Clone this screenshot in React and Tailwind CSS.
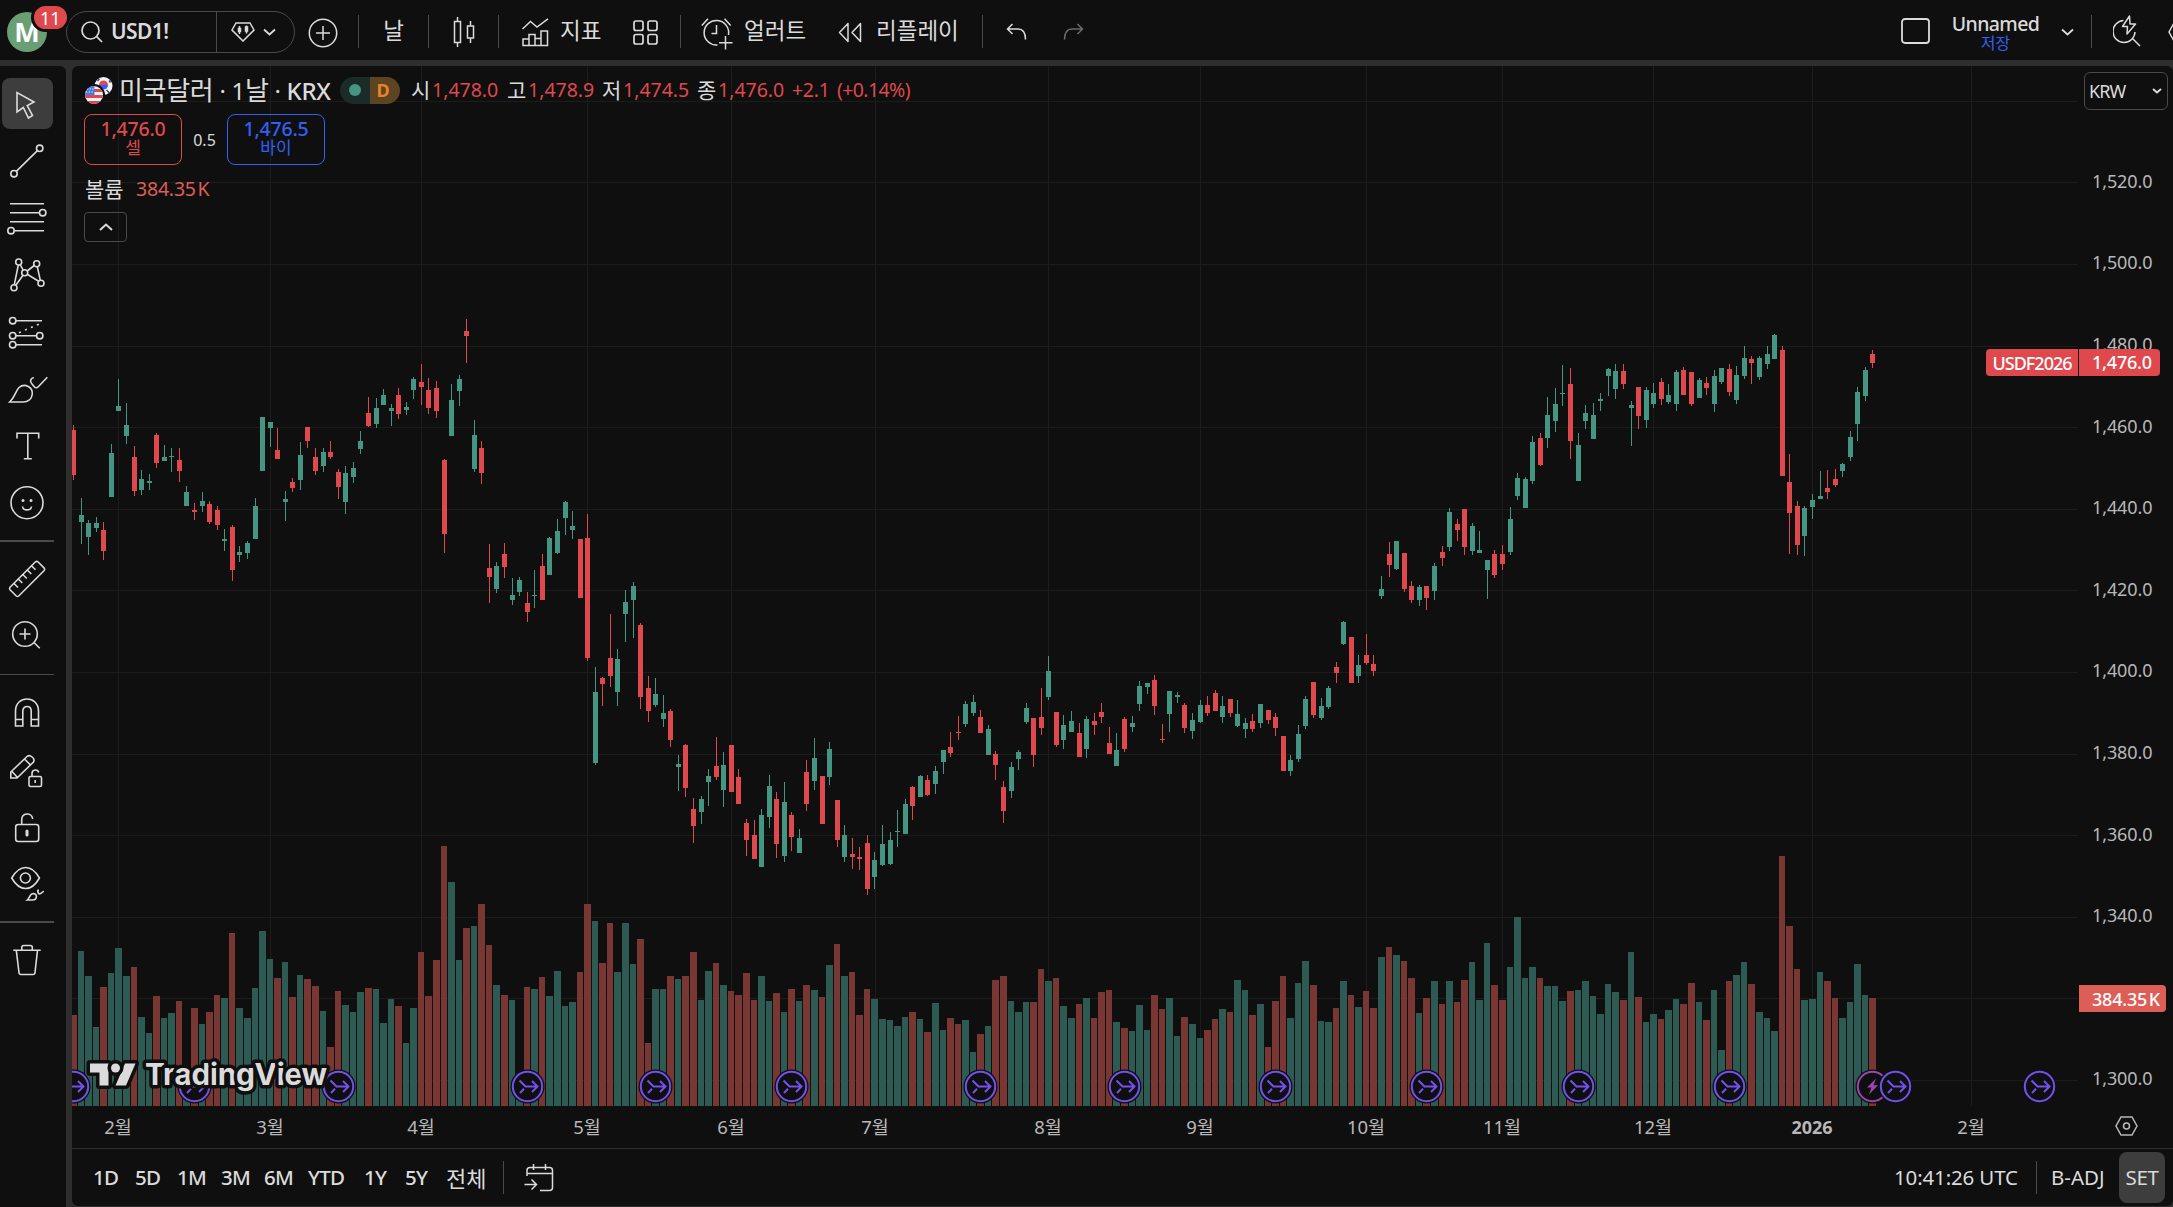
import React from "react";

// one row per session: direction, high, body top, body bottom, low, volume top
const SESSIONS = `
R 425 430 475 480 1015|G 498 515 522 544 951|G 520 523 537 555 976|G 517 523 528 532 1027|R 522 530 551 560 987|G 444 453 497 497 973
G 379 406 411 411 948|G 403 425 436 444 976|R 446 457 491 496 967|G 470 479 490 495 1017|G 474 481 483 490 1033|R 433 435 463 468 996
G 445 457 461 461 1018|G 448 456 457 472 1013|R 448 460 471 482 1001|G 486 492 506 506 1078|R 503 510 512 520 1008|G 492 501 506 512 1024
R 501 504 522 524 1012|R 506 510 525 530 995|G 529 539 541 551 998|R 525 527 570 581 933|G 546 552 555 562 1008|G 541 543 553 559 1018
G 498 506 539 539 988|G 417 417 471 471 931|G 422 422 428 447 959|R 428 450 459 459 978|G 491 499 502 521 962|R 478 482 488 492 997
G 442 455 480 490 975|R 427 427 441 448 979|R 448 457 471 475 986|G 448 452 466 472 1011|R 441 452 457 459 1047|R 469 472 487 499 991
G 466 473 502 514 1005|G 462 468 477 483 1012|G 431 441 449 454 992|R 397 413 426 427 988|G 398 408 424 428 989|G 389 395 405 405 1023
G 404 408 411 426 999|R 388 395 414 419 1006|G 402 407 410 415 1043|G 377 379 390 399 1008|R 364 382 387 405 952|R 378 390 408 414 996
R 381 388 411 418 960|R 459 460 534 553 846|G 384 400 436 436 882|G 375 379 391 406 960|R 319 331 336 363 928|G 420 435 469 472 926
R 441 448 473 484 904|R 544 568 577 603 945|G 562 566 589 593 985|R 543 554 567 578 995|G 578 595 600 605 1000|G 577 580 592 596 1073
R 592 603 612 622 987|G 570 595 596 608 989|R 554 566 600 600 977|G 537 538 575 575 996|G 519 531 553 554 971|G 501 502 518 535 1006
G 511 526 530 539 1002|R 539 539 598 598 972|R 514 538 658 661 904|G 667 692 763 765 921|R 677 678 684 706 963|R 614 658 676 687 923
G 649 659 692 706 972|G 590 602 614 642 923|G 582 586 600 638 964|R 623 625 697 709 939|R 676 688 711 722 1043|G 678 694 705 707 989
G 695 713 719 727 989|R 709 711 740 747 976|G 755 764 767 791 979|R 744 745 788 797 976|R 798 809 826 843 952|G 796 799 812 824 1000
G 769 776 782 806 971|R 737 766 777 780 963|G 752 765 790 807 985|R 745 745 792 792 991|R 769 777 804 804 995|R 819 823 840 856 973
R 820 835 859 859 1000|G 809 815 867 867 976|G 775 786 817 828 1001|R 792 799 844 858 993|G 782 802 856 862 1012|R 812 815 837 851 989
G 829 838 853 853 1001|R 760 772 804 811 985|G 738 758 781 790 990|R 776 776 824 824 997|G 742 749 777 785 965|R 800 800 840 847 944
G 825 835 857 862 976|R 838 854 857 869 972|R 847 857 859 870 1015|R 835 843 889 895 989|G 852 860 877 889 999|G 825 844 865 866 1019
G 832 840 864 865 1020|G 810 831 832 847 1026|G 799 804 834 834 1017|R 786 787 806 820 1012|G 775 776 797 797 1019|R 775 780 795 796 1032
G 766 771 784 794 1003|G 750 750 762 774 1030|R 732 747 753 757 1018|R 716 732 733 740 1024|G 701 704 724 727 1020|G 695 702 713 716 1052
R 710 717 733 733 1034|G 725 729 755 755 1026|R 751 754 765 780 980|R 781 787 811 823 976|G 762 767 791 798 1001|G 750 752 759 770 1012
G 703 708 722 724 1002|R 718 718 755 767 1002|R 688 717 728 735 969|G 656 671 697 700 981|R 712 712 745 747 978|G 715 725 740 749 1006
G 711 721 732 732 1018|R 723 733 757 757 1004|G 716 719 749 758 998|R 713 721 725 735 1018|R 703 712 717 723 992|R 727 743 754 754 990
G 733 750 766 766 1022|R 717 719 749 752 1028|G 716 723 727 732 1031|G 681 686 704 711 1005|G 683 683 687 694 1030|R 675 680 706 715 995
R 724 739 740 743 1009|G 691 691 714 732 998|G 692 695 697 703 1036|R 703 705 728 733 1017|G 713 720 731 739 1024|G 700 705 722 723 1038
R 696 705 713 716 1030|R 690 693 711 711 1019|G 696 706 717 723 1009|R 699 699 713 717 1012|G 700 714 726 727 980|G 718 723 729 738 990
R 714 721 729 732 1015|G 704 704 723 728 1004|R 710 710 720 724 1047|R 713 717 728 736 1001|R 736 736 771 771 976|G 755 760 771 776 1018
G 725 734 759 762 983|G 696 699 726 729 961|R 682 682 715 718 985|G 698 706 718 720 1021|G 686 688 707 709 1022|R 662 667 673 683 1008
G 621 622 644 645 981|R 637 637 683 683 995|G 655 665 676 683 1007|R 634 655 663 665 991|R 655 664 671 676 1008|G 576 589 596 599 957
R 542 554 565 577 947|G 541 541 569 570 955|R 553 553 589 592 961|R 581 586 600 603 978|G 585 587 600 606 1013|R 586 586 598 610 998
G 563 566 591 600 981|R 546 552 558 566 1004|G 508 512 547 551 981|R 519 524 530 541 1002|R 509 509 547 555 980|G 523 526 551 555 962
G 531 550 553 553 1000|G 560 560 570 599 943|R 550 554 575 578 985|R 545 554 564 570 1000|G 507 519 552 555 967|G 473 478 496 500 917
G 477 479 508 508 978|G 436 442 481 484 967|R 433 438 465 466 978|G 397 415 438 448 986|G 388 404 421 432 986|G 365 393 394 406 1001
R 368 384 441 459 991|G 433 445 481 481 990|G 405 413 421 429 981|G 403 415 439 439 996|G 393 399 401 411 1014|G 368 369 376 396 984
G 364 371 389 399 992|R 364 371 384 389 1000|G 401 405 408 446 952|R 387 387 416 429 997|G 387 390 420 428 1022|G 383 393 404 408 1014
R 378 382 399 405 1019|G 384 395 402 404 1010|G 370 372 404 411 999|R 367 370 395 395 1004|R 372 372 404 406 983|G 378 380 398 398 1002
R 377 383 388 395 1020|G 370 376 404 412 990|G 368 368 382 384 1050|R 364 369 392 396 981|G 366 375 400 404 975|G 346 358 376 379 962
R 356 359 363 384 984|G 356 358 377 380 1012|G 346 354 364 369 1018|G 334 335 359 359 1031|R 346 350 476 476 856|R 454 482 513 554 926
R 501 506 545 555 969|G 506 508 536 556 1000|G 494 500 507 519 999|G 471 496 499 499 972|R 470 488 492 499 981|R 469 479 485 487 998
G 463 464 471 477 1018|G 431 437 457 461 1002|G 387 392 424 441 964|G 367 370 396 401 995|R 350 354 363 368 998`
  .trim()
  .split(/[|\n]/)
  .map((row) => {
    const [dir, ...nums] = row.split(" ");
    const [high, top, bottom, low, volume] = nums.map(Number);
    return { up: dir === "G", high, top, bottom, low, volume };
  });

const FIRST = -6;
const barX = (i) => Math.round(118.45 + i * 7.5603);

const PRICES = ["1,520.0", "1,500.0", "1,480.0", "1,460.0", "1,440.0", "1,420.0", "1,400.0", "1,380.0", "1,360.0", "1,340.0", "", "1,300.0"];
const GRID_Y = [101, 182, 264, 346, 427, 509, 590, 672, 754, 835, 917, 998, 1080];
const MONTHS = [
  [118, "2월"], [270, "3월"], [421, "4월"], [587, "5월"], [731, "6월"], [875, "7월"], [1048, "8월"],
  [1200, "9월"], [1366, "10월"], [1502, "11월"], [1653, "12월"], [1812, "2026"], [1971, "2월"],
];
const ROLLS = [-6, 10, 29, 54, 71, 89, 114, 133, 153, 173, 193, 213, 235, 254];

const Roll = ({ x }) => (
  <g transform={`translate(${x + 0.5} 1086.5)`} fill="none" stroke="#7350f2" strokeWidth="2">
    <circle r="17" fill="#0f0f0f" stroke="none" />
    <circle r="14.7" />
    <path d="M-8 -6 L-2 0 H9.5 M4.500 -5.500 L10 0 L4.500 5.500 M-7.500 6.500 L-3.500 2.200" />
  </g>
);

const Chart = () => (
  <svg width="2006" height="1082" viewBox="72 66 2006 1082" className="block shrink-0">
    <g fill="#1c1c1c">
      {GRID_Y.map((y) => <rect key={y} x="72" y={y} width="2006" height="1" />)}
      {MONTHS.map(([x]) => <rect key={x} x={x} y="66" width="1" height="1040" />)}
    </g>
    <g shapeRendering="crispEdges">
      {SESSIONS.map((s, n) => {
        const x = barX(n + FIRST);
        const right = Math.min(x + 4, barX(n + FIRST + 1) - 4);
        return (
          <rect key={n} x={x - 3} y={s.volume} width={right - x + 3} height={1106 - s.volume} fill={s.up ? "#2d5a53" : "#783733"} />
        );
      })}
      {SESSIONS.map((s, n) => {
        const x = barX(n + FIRST);
        return (
          <g key={n} fill={s.up ? "#449682" : "#df484c"}>
            <rect x={x} y={s.high} width="1" height={s.low - s.high} />
            <rect x={x - 2} y={s.top} width="5" height={s.bottom - s.top} />
          </g>
        );
      })}
    </g>

    {/* session event */}
    <g transform="translate(1872.5 1086.5)">
      <circle r="17" fill="#0f0f0f" />
      <circle r="14.7" fill="none" stroke="#9c45b0" strokeWidth="2" />
      <path d="M3.500 -8 L-5.500 1 H-1 L-3.500 8 L5.500 -1.200 H1 Z" fill="#9c45b0" />
    </g>
    {ROLLS.map((i) => <Roll key={i} x={barX(i)} />)}

    {/* watermark */}
    <g fill="#dbdbdb" stroke="#0f0f0f" strokeWidth="7" strokeLinejoin="round" paintOrder="stroke">
      <path d="M90 1063.500h18.500v22h-9v-13h-9.500zM125 1063.500h10.500l-9.500 22h-10.500z" />
      <circle cx="115.500" cy="1068" r="4.500" />
      <text x="145" y="1085" textLength="182" className="font-['Inter',sans-serif] text-[30px] font-bold">TradingView</text>
    </g>

    <g fill="#b8b8b8" textAnchor="middle" className="text-[18.500px]">
      {MONTHS.map(([x, label]) => (
        <text key={x} x={x} y="1134" className={label === "2026" ? "text-[18px] font-bold" : "font-normal"}>{label}</text>
      ))}
    </g>
  </svg>
);

const Svg = ({ w, h, sw = 1.5, className = "", children }) => (
  <svg width={w} height={h} viewBox={`0 0 ${w} ${h}`} fill="none" stroke="currentColor" strokeWidth={sw} className={`block shrink-0 ${className}`}>
    {children}
  </svg>
);

const Divider = ({ className = "" }) => <div className={`h-[33px] w-px shrink-0 bg-[#4a4a4a] ${className}`} />;

const Chevron = ({ className }) => (
  <Svg w={13} h={8} sw={1.8} className={className}><path d="M1 1.500l5.500 5 5.500-5" /></Svg>
);

const Header = () => (
  <header className="flex h-[60px] shrink-0 items-center overflow-hidden text-[22.500px]">
    <div className="relative flex h-full w-[66px] shrink-0 items-center pl-[7px] pt-1">
      <div className="flex size-10 items-center justify-center rounded-full bg-[#6a9f75] text-[27px] font-bold text-white">M</div>
      <div className="absolute left-[31px] top-[3px] flex h-[29px] items-center justify-center rounded-full border-[3px] border-[#0f0f0f] bg-[#df484c] px-[6px] text-[18px] leading-none text-white">11</div>
    </div>
    <div className="mt-[3px] flex h-[42px] w-[229px] shrink-0 items-center rounded-full border border-[#4a4a4a]">
      <Svg w={22} h={22} sw={1.7} className="ml-[14px]"><circle cx="9.500" cy="9.500" r="8.500" /><path d="M15.700 15.700l5.300 5.300" /></Svg>
      <span className="ml-[8px] w-[105px] text-[21px] font-semibold leading-none tracking-[-0.6px]">USD1!</span>
      <div className="h-full w-px bg-[#4a4a4a]" />
      <Svg w={24} h={20} className="ml-[14px]">
        <path d="M5 1h14l4 7-11 11L1 8z" />
        <path d="M8.500 4v8M15.500 3.500v8" />
        <path d="M7.500 6.500h2v3h-2zM14.500 5h2v4h-2z" fill="currentColor" />
      </Svg>
      <Chevron className="ml-[8px]" />
    </div>
    <Svg w={30} h={30} className="ml-[13px] mt-[5px]"><circle cx="15" cy="15" r="13.700" /><path d="M15 8v14M8 15h14" /></Svg>
    <Divider className="ml-[20px] mt-[3px] w-[2px]" />
    <span className="mt-[3px] w-[69px] shrink-0 text-center leading-none">날</span>
    <Divider className="mt-[3px]" />
    <Svg w={22} h={30} className="ml-[24px] mt-[4px]">
      <path d="M1.500 4.500h6v21h-6zM4.500 0v4.500M4.500 25.500V30M14.500 9h6v12h-6zM17.500 4v5M17.500 21v5" />
    </Svg>
    <Divider className="ml-[23px] mt-[3px]" />
    <Svg w={27} h={29} className="ml-[23px] mt-[4px]">
      <path d="M.500 11L8.500 3.500l6.500 5.500L26 .800M1 27.500V21h6v-4.500h6v4h6V13h6.500v14.500zM7 21v6.500M13 20v7.500M19 20v7.500" />
    </Svg>
    <span className="ml-[11px] mt-[3px] w-[73px] shrink-0 leading-none">지표</span>
    <Svg w={25} h={25} sw={1.700} className="mt-[4px]">
      <rect x="1" y="1" width="9" height="9.500" rx="2" /><rect x="15" y="1" width="9" height="9.500" rx="2" />
      <rect x="1" y="14.500" width="9" height="9.500" rx="2" /><rect x="15" y="14.500" width="9" height="9.500" rx="2" />
    </Svg>
    <Divider className="ml-[22px] mt-[3px]" />
    <Svg w={32} h={32} className="ml-[20px] mt-[7px]">
      <path d="M16.500 27A12.300 12.300 0 1 1 27.500 17M15.500 7v8.500H10.500M.800 7.500L7 .800M23.500.800l6.200 6.700M24.500 18v13.500M18 24.700h13.500" />
    </Svg>
    <span className="ml-[11px] mt-[3px] w-[94px] shrink-0 leading-none">얼러트</span>
    <Svg w={24} h={21} className="mt-[5px]"><path d="M10 1.500v18L1.500 10.500zM22.500 1.500v18L14 10.500z" strokeLinejoin="round" /></Svg>
    <span className="ml-[14px] mt-[3px] w-[106px] shrink-0 leading-none">리플레이</span>
    <Divider className="mt-[3px] w-[2px]" />
    <Svg w={21} h={18} className="ml-[23px] mt-[4px]"><path d="M6.500 1L1.500 6l5 5M1.500 6H12c5 0 7.500 3 7.500 10.500" /></Svg>
    <Svg w={21} h={18} className="ml-[36px] mt-[4px] text-[#6b6b6b]"><path d="M14.500 1l5 5-5 5M19.500 6H9C4 6 1.500 9 1.500 16.500" /></Svg>

    <Svg w={29} h={26} sw={1.800} className="ml-auto mt-[2px]"><rect x="1" y="1" width="27" height="24" rx="3" /></Svg>
    <div className="ml-[16px] mt-[2px] flex w-[99px] shrink-0 flex-col items-center">
      <span className="text-[19.500px] font-medium leading-[26px] tracking-[-0.6px]">Unnamed</span>
      <span className="-mt-px text-[16px] leading-[15px] text-[#3160f5]">저장</span>
    </div>
    <Chevron className="ml-[16px] mt-[4px]" />
    <Divider className="ml-[17px] mt-[3px]" />
    <Svg w={28} h={32} className="ml-[21px] mt-[2px]">
      <path d="M10.500 5.500A11 11 0 1 0 22 17M20 24l7 7M16.500 1L9.500 11.500h5L14 19l8.500-10H17z" strokeLinejoin="round" />
    </Svg>
    <Svg w={5} h={20} className="ml-[27px] mt-[4px]"><path d="M6 1L1 10l5 9" /></Svg>
  </header>
);

const Tool = ({ active, children }) => (
  <div className="flex h-[57px] w-[54px] shrink-0 items-center pl-[2px]">
    <div className={`h-[51px] w-[51px] rounded-lg ${active ? "bg-[#3d3d3d]" : ""}`}>
      <Svg w={54} h={57} sw={1.600} className="-ml-[2px] -mt-[3px]">{children}</Svg>
    </div>
  </div>
);

const ToolRule = ({ className }) => (
  <div className="h-5 w-[54px] shrink-0"><div className={`w-full bg-[#4a4a4a] ${className}`} /></div>
);

const Toolbar = () => (
  <aside className="flex w-[66px] shrink-0 flex-col rounded-tr-md bg-[#0f0f0f] pt-[9px]">
    <Tool active><path d="M17 17.500V37l6.300-4.500L28.500 43l4-2.500-5.200-10L34 27z" /></Tool>
    <Tool><circle cx="39.700" cy="16.300" r="3.200" /><circle cx="14" cy="41.700" r="3.200" /><path d="M37.400 18.600L16.300 39.400" /></Tool>
    <Tool>
      <path d="M10 14.700h34M10 23.700h29.500M10 32.700h34M14.200 41.700H44" /><circle cx="42.700" cy="23.700" r="3.200" /><circle cx="11" cy="41.700" r="3.200" />
    </Tool>
    <Tool>
      <circle cx="18.700" cy="16" r="3" /><circle cx="36.700" cy="17.700" r="3" /><circle cx="24.700" cy="26.700" r="3" /><circle cx="14" cy="41.700" r="3" /><circle cx="41" cy="37.300" r="3" />
      <path d="M18.300 19l-4 19.700M20.200 18.600l3 5.500M23 29.200l-7.200 10M27.200 25l7-5.500M37.300 20.700l3 13.600M27.200 28.300l11.500 7" />
    </Tool>
    <Tool>
      <circle cx="12.700" cy="17.700" r="3.200" /><circle cx="12.700" cy="32.700" r="3.200" /><circle cx="12.700" cy="41.700" r="3.200" /><circle cx="39.700" cy="32.700" r="3.200" />
      <path d="M16 17.700h26M16 32.700h20.500M16 41.700h26" /><path d="M19 29.700l21-9" strokeDasharray="2 4.500" />
    </Tool>
    <Tool>
      <path d="M9.700 42C15 37 15.500 31 19 27.500c6-5 14 0 13.300 6.500-.5 5-4.300 8-9.300 8zM33.800 17.500c-3.500 1-4.300 4-1.800 6.500l2.500 3c1.500 1.500 3 .5 4-.5l8.800-9.200" />
    </Tool>
    <Tool><path d="M17 21.500V16.200h21.700v5.300M27.800 16.200v25.500M23.800 41.700h8" /></Tool>
    <Tool>
      <circle cx="27" cy="28.700" r="16" /><path d="M22.500 32.500c.5 4.500 8.500 4.500 9 0" />
      <circle cx="23" cy="26.500" r="1.500" fill="currentColor" stroke="none" /><circle cx="31" cy="26.500" r="1.500" fill="currentColor" stroke="none" />
    </Tool>
    <ToolRule className="mt-[9px] h-[2px]" />
    <Tool>
      <path d="M10 36.300L35.500 10.800q1.200-1 2.400 0l6.300 6.300q1 1.200 0 2.400L18.700 45q-1.200 1-2.400 0L10 38.700q-1-1.200 0-2.400zM14 32.500l4 4M18.300 28l4 4M22.800 23.500l4 4M27.300 19l4 4M31.500 14.800l4 4" />
    </Tool>
    <Tool><circle cx="25" cy="26" r="12.300" /><path d="M34 34.500l5.700 5.700M25 20.500v11M19.500 26h11" /></Tool>
    <ToolRule className="mt-[9px] h-px" />
    <Tool>
      <path d="M15.500 41V26c0-16 23-16 23 0v15h-7.300V26c0-6-8.400-6-8.400 0v15zM15.500 34.500h7.300M31.200 34.500h7.300" />
    </Tool>
    <Tool>
      <path d="M10.800 36v-6L27 14.500c3-2.500 8.500 2 6.500 5.500L17 36zM12 29.500l5.500 6M24.500 17l6 6" />
      <rect x="29" y="34.500" width="12.500" height="10" rx="1.500" /><path d="M32 34.500v-3c0-4.500 6-4.500 6.700-1M35.200 38v3" />
    </Tool>
    <Tool>
      <rect x="15.700" y="25.500" width="23" height="17" rx="2.500" /><path d="M21.700 25.500V21c0-7.500 10-8 11-1" /><path d="M27 32v4" strokeWidth="3" strokeLinecap="round" />
    </Tool>
    <Tool>
      <path d="M11.700 22c8-14 20-14 27.700 0-7.700 14-19.700 14-27.700 0z" /><circle cx="25.400" cy="22" r="5" />
      <path d="M27.500 44c2-1.500 2-6.500 6-6.500 4.500 1 3.500 6.500-1 6.500zM38.500 33.500c-1 1.500-1 3 .5 4.500 2 0 3-1.500 4.700-3" />
    </Tool>
    <ToolRule className="mt-[8px] h-[2px]" />
    <Tool><path d="M13.300 17.300h27.400M21.800 17v-2.500q0-2 2-2h6.500q2 0 2 2V17M16.300 17.300L19 39.500q.2 2 2 2h12q1.800 0 2-2l2.500-22.200" /></Tool>
  </aside>
);

const Ohlc = ({ name, value, className }) => (
  <span className={`flex shrink-0 items-center ${className}`}>
    <span className="w-[21px] text-[21px]">{name}</span>
    <span className="text-[#df484c]">{value}</span>
  </span>
);

const Legend = () => (
  <div className="absolute left-[12px] top-[7px] flex flex-col">
    <div className="flex h-[34px] items-center leading-none">
      <svg width="29" height="29" viewBox="0 0 29 29" className="block shrink-0">
        <circle cx="19.500" cy="10" r="9" fill="#f0f3fa" />
        <path d="M15 9a4.500 4.500 0 0 1 9 0z" fill="#df484c" /><path d="M15 9a4.500 4.500 0 0 0 9 0z" fill="#2962ff" />
        <path d="M22.500 14l3 3M25 4.500l1.500 2M13.500 5l2-2" stroke="#3d3d3d" strokeWidth="1.300" />
        <circle cx="10" cy="19" r="11" fill="#0f0f0f" />
        <clipPath id="us"><circle cx="10" cy="19" r="9" /></clipPath>
        <g clipPath="url(#us)">
          <rect width="20" height="29" fill="#f0f3fa" />
          <path d="M0 14.500h20M0 20.500h20M0 26.500h20" stroke="#df484c" strokeWidth="3" />
          <rect width="10.500" height="19" fill="#3f7de0" />
          <path d="M3 13h7M2 16h8" stroke="#fff" strokeWidth="1.200" strokeDasharray="1.200 1.500" />
        </g>
      </svg>
      <span className="ml-[6px] w-[221px] shrink-0 whitespace-nowrap text-[24px] tracking-[-0.3px]">
        <span className="text-[26px]">미국달러</span> · 1<span className="text-[26px]">날</span> · <span className="font-medium">KRX</span>
      </span>
      <div className="flex h-[27px] w-[60px] shrink-0 overflow-hidden rounded-full">
        <div className="flex w-[30px] items-center justify-center bg-[#1a2b28]"><div className="size-3 rounded-full bg-[#449682]" /></div>
        <div className="flex w-[30px] items-center justify-center bg-[#5c4321] pr-1 text-[18px] font-bold text-[#e8832a]">D</div>
      </div>
      <div className="ml-[11px] flex items-center whitespace-nowrap text-[19.500px]">
        <Ohlc name="시" value="1,478.0" className="w-[96px]" />
        <Ohlc name="고" value="1,478.9" className="w-[95px]" />
        <Ohlc name="저" value="1,474.5" className="w-[95px]" />
        <Ohlc name="종" value="1,476.0" className="w-[95px]" />
        <span className="w-[45px] tracking-[-0.3px] text-[#df484c]">+2.1</span>
        <span className="tracking-[-0.6px] text-[#df484c]">(+0.14%)</span>
      </div>
    </div>
    <div className="mt-[7px] flex items-center">
      <div className="flex h-[51px] w-[98px] flex-col items-center rounded-lg border border-[#df484c] pt-[3px] text-[#df484c]">
        <span className="text-[19.500px] font-medium leading-[21px] tracking-[-0.2px]">1,476.0</span>
        <span className="text-[17px] leading-[18px]">셀</span>
      </div>
      <span className="w-[45px] text-center text-[16px] leading-none">0.5</span>
      <div className="flex h-[51px] w-[98px] flex-col items-center rounded-lg border border-[#3160f5] pt-[3px] text-[#3160f5]">
        <span className="text-[19.500px] font-medium leading-[21px] tracking-[-0.2px]">1,476.5</span>
        <span className="text-[17px] leading-[18px]">바이</span>
      </div>
    </div>
    <div className="mt-[9px] flex h-[30px] items-center text-[19.500px] leading-none">
      <span className="ml-px w-[51px] text-[21px]">볼륨</span><span className="tracking-[-0.2px] text-[#dd5e56]">384.35{"\u200a"}K</span>
    </div>
    <div className="mt-[8px] flex h-[30px] w-[43px] items-center justify-center rounded border border-[#4a4a4a]">
      <Svg w={14} h={8} sw={2}><path d="M1 7l6-5.500L13 7" /></Svg>
    </div>
  </div>
);

const PriceAxis = () => (
  <div className="relative w-[95px] shrink-0 text-[18px] text-[#b8b8b8]">
    <div className="flex h-[74px] flex-col pl-[6px] pt-[6px]">
      <button className="flex h-[38px] w-[84px] items-center justify-between rounded-md border border-[#4a4a4a] pb-px pl-[4px] pr-[5px] text-[18px] leading-none tracking-[-0.9px] text-[#dbdbdb]">
        KRW<Svg w={10} h={6} sw={2}><path d="M1 1l4 3.500L9 1" /></Svg>
      </button>
    </div>
    {PRICES.map((p, i) => (
      <div key={i} className="flex h-[81.600px] items-center pl-[14px] leading-none tracking-[-0.1px]">{p}</div>
    ))}
    <div className="absolute -left-[92px] top-[283px] flex h-[27px] gap-px leading-none text-white">
      <div className="flex w-[92px] items-center justify-center rounded-l-sm bg-[#df484c] font-medium tracking-[-1px]">USDF2026</div>
      <div className="flex w-[81px] items-center rounded-r-sm bg-[#df484c] pb-px pl-[13px] font-medium tracking-[-0.2px]">1,476.0</div>
    </div>
    <div className="absolute left-px top-[919px] flex h-[27px] w-[87px] items-center whitespace-nowrap rounded-r-sm bg-[#dd5e56] pl-[13px] font-medium leading-none tracking-[-0.2px] text-white">384.35{"\u200a"}K</div>
    <Svg w={23} h={20} className="absolute bottom-[12px] left-[37px]">
      <path d="M6 1h11l5 9-5 9H6l-5-9z" /><circle cx="11.500" cy="10" r="3" />
    </Svg>
  </div>
);

const RANGES = [["1D", "w-[42px]"], ["5D", "w-[42px]"], ["1M", "w-[44px]"], ["3M", "w-[43px]"], ["6M", "w-[44px]"], ["YTD", "w-[56px]"], ["1Y", "w-[41px]"], ["5Y", "w-[41px]"]];

const Footer = () => (
  <footer className="flex h-[58px] shrink-0 items-center whitespace-nowrap border-t border-[#2e2e2e] pl-[21px] text-[20.500px] leading-none">
    {RANGES.map(([label, w]) => <span key={label} className={`shrink-0 font-medium tracking-[-0.8px] ${w}`}>{label}</span>)}
    <span className="w-[57px] shrink-0 text-[22px]">전체</span>
    <Divider />
    <Svg w={30} h={28} className="ml-[20px]">
      <path d="M3 12V6.500Q3 3.500 6 3.500h19.500q3 0 3 3v17q0 3-3 3H16M3 9.500h25.500M9.500 0v6M21.500 0v6M.500 20.500H12M7.500 15.500l5 5-5 5" />
    </Svg>
    <span className="ml-auto w-[142px] tracking-[-0.15px]">10:41:26 UTC</span>
    <Divider />
    <span className="ml-[14px] w-[68px]">B-ADJ</span>
    <div className="mr-[8px] flex h-[51px] w-[46px] items-center justify-center rounded-lg bg-[#3d3d3d] tracking-[-0.4px]">SET</div>
  </footer>
);

const App = () => (
  <div className="flex h-[1207px] w-[2173px] flex-col overflow-hidden bg-[#0f0f0f] font-['Noto_Sans','Noto_Sans_CJK_KR',sans-serif] text-[#dbdbdb]">
    <Header />
    <div className="flex min-h-0 flex-1 gap-[6px] bg-[#2e2e2e] pt-[6px]">
      <Toolbar />
      <main className="flex flex-1 flex-col">
        <div className="flex flex-1 flex-col overflow-hidden rounded-md bg-[#0f0f0f]">
          <div className="relative flex h-[1082px] shrink-0">
            <Chart />
            <PriceAxis />
            <Legend />
          </div>
          <Footer />
        </div>
        <div className="h-px shrink-0" />
      </main>
    </div>
  </div>
);

export default App;
